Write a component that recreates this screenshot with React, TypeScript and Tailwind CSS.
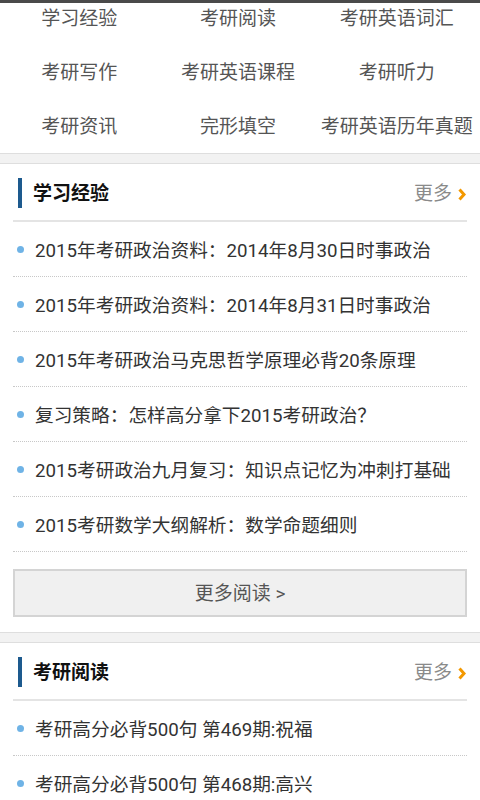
import React from "react";

const nav = [
  "学习经验", "考研阅读", "考研英语词汇",
  "考研写作", "考研英语课程", "考研听力",
  "考研资讯", "完形填空", "考研英语历年真题",
];

const sec1 = [
  "2015年考研政治资料：2014年8月30日时事政治",
  "2015年考研政治资料：2014年8月31日时事政治",
  "2015年考研政治马克思哲学原理必背20条原理",
  "复习策略：怎样高分拿下2015考研政治？",
  "2015考研政治九月复习：知识点记忆为冲刺打基础",
  "2015考研数学大纲解析：数学命题细则",
];

const sec2 = [
  "考研高分必背500句 第469期:祝福",
  "考研高分必背500句 第468期:高兴",
];

const font = { fontFamily: 'Roboto, "Noto Sans CJK SC", sans-serif' };

function Band() {
  return <div className="h-[11px] bg-[#f2f2f2] border-t border-b border-[#dedede]" />;
}

function Header({ title }: { title: string }) {
  return (
    <div className="mx-[13px] h-[58px] flex items-center border-b-2 border-[#e4e4e4]">
      <div className="w-[4px] h-[30px] bg-[#1d5a8e] ml-[5px] mt-[2px]" />
      <div className="ml-[11px] mt-[5px] text-[19px] font-bold text-[#111]">{title}</div>
      <div className="ml-auto mt-[4px] flex items-center">
        <span className="text-[19px] text-[#8a8a8a]">更多</span>
        <svg width="10" height="13" viewBox="0 0 10 13" className="ml-[5px]">
          <path d="M2.5 1.5 L7 6.5 L2.5 11.5" stroke="#f39800" strokeWidth="3" fill="none" />
        </svg>
      </div>
    </div>
  );
}

function Item({ text }: { text: string }) {
  return (
    <div className="mx-[13px] h-[55px] flex items-center border-b border-dotted border-[#c8c8c8]">
      <div className="w-[7px] h-[7px] rounded-full bg-[#6fb3e6] ml-[4px] mt-[1px]" />
      <div className="ml-[11px] mt-[4px] text-[18.7px] text-[#333] whitespace-nowrap">{text}</div>
    </div>
  );
}

export default function App() {
  return (
    <div className="w-[480px] h-[800px] overflow-hidden bg-white" style={font}>
      <div className="h-[3px] bg-[#4a4a4a]" />
      <div className="h-[150px] overflow-hidden">
        <div className="grid grid-cols-3 w-[476px] -mt-[12px]">
          {nav.map((n) => (
            <div key={n} className="h-[54px] flex items-center justify-center text-[19px] text-[#555]">
              <span className="mt-[3px]">{n}</span>
            </div>
          ))}
        </div>
      </div>
      <Band />
      <Header title="学习经验" />
      {sec1.map((t) => (
        <Item key={t} text={t} />
      ))}
      <div className="mx-[13px] mt-[17px] h-[48px] bg-[#f0f0f0] border-2 border-[#d4d4d4] flex items-center justify-center text-[19px] text-[#555]">
        <span className="mt-[3px]">更多阅读 &gt;</span>
      </div>
      <div className="h-[15px]" />
      <Band />
      <Header title="考研阅读" />
      {sec2.map((t) => (
        <Item key={t} text={t} />
      ))}
    </div>
  );
}
